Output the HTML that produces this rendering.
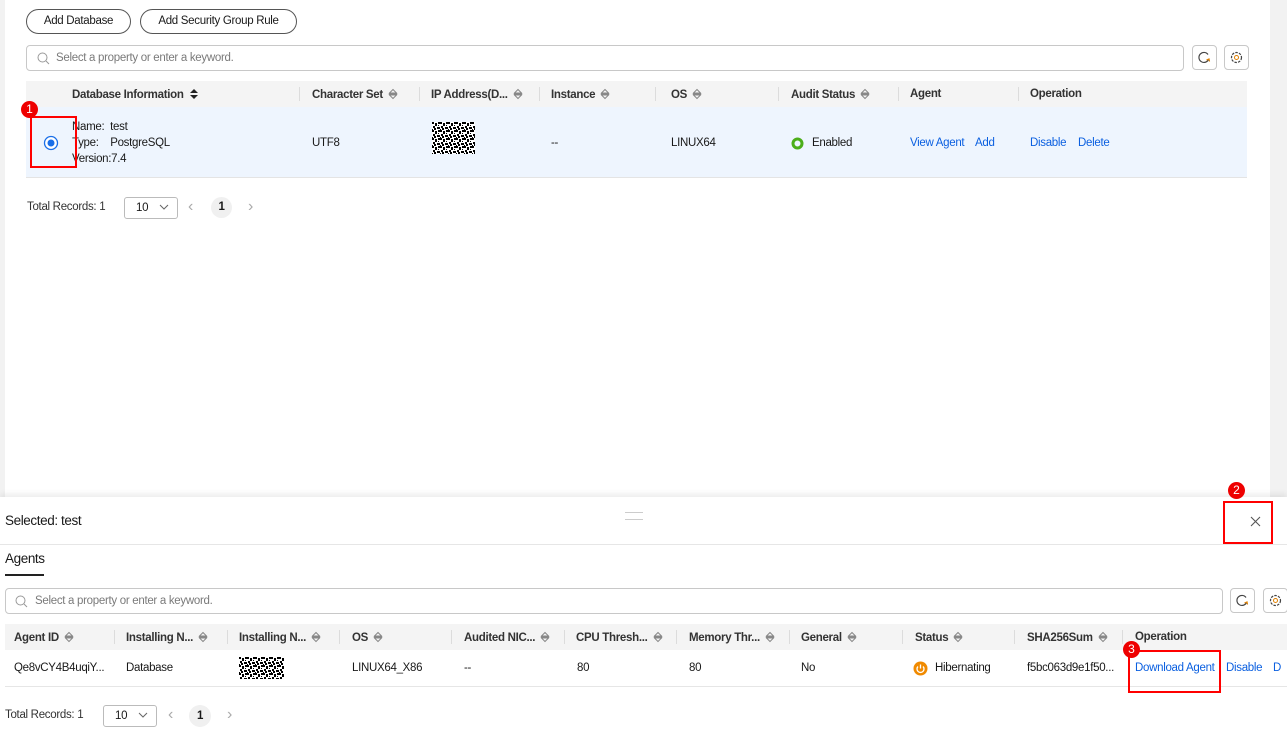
<!DOCTYPE html>
<html><head><meta charset="utf-8"><style>
*{box-sizing:border-box;margin:0;padding:0}
body{width:1287px;height:744px;position:relative;overflow:hidden;background:#fff;font-family:"Liberation Sans",Arial,sans-serif;font-size:11.5px;letter-spacing:-0.3px;color:#191919}
.a{position:absolute;white-space:nowrap}
.btn{position:absolute;border:1px solid #555;border-radius:14px;height:25px;line-height:23px;text-align:center;color:#191919;background:#fff}
.search{position:absolute;border:1px solid #c8c8c8;border-radius:4px;height:26px;color:#7a7a7a;line-height:24px;padding-left:29px}
.ib{position:absolute;width:25px;height:25px;border:1px solid #c8c8c8;border-radius:4px;background:#fff}
.hd{position:absolute;background:#f4f4f4;height:26px}
.th{position:absolute;top:7px;font-weight:bold;color:#333;white-space:nowrap}
.sep{position:absolute;top:6px;width:1px;height:14px;background:#dcdcdc}
.lnk{color:#0a5fe0}
.red{position:absolute;border:2px solid #f00}
.badge{position:absolute;width:17px;height:17px;border-radius:50%;background:#e00;color:#fff;font-size:12px;line-height:17px;text-align:center;letter-spacing:0}
.sort{display:inline-block;vertical-align:-2px;margin-left:5px}
.big{font-size:13.5px;letter-spacing:-0.4px}
.chev{font-size:16px;color:#aaa}
</style></head><body>
<svg width="0" height="0" style="position:absolute"><defs>
<symbol id="s" viewBox="0 0 10 12"><path d="M1.5 5 L5 1.5 L8.5 5 Z M1.5 7 L5 10.5 L8.5 7 Z" fill="none" stroke="#888" stroke-width="1"/><line x1="1" y1="6" x2="9" y2="6" stroke="#888"/></symbol>
<pattern id="qr" width="8" height="8" patternUnits="userSpaceOnUse"><rect width="8" height="8" fill="#fff"/><rect x="0" y="0" width="2" height="2" fill="#000"/><rect x="3" y="1" width="2" height="3" fill="#000"/><rect x="6" y="0" width="2" height="2" fill="#000"/><rect x="1" y="4" width="2" height="2" fill="#000"/><rect x="5" y="5" width="3" height="2" fill="#000"/><rect x="2" y="6" width="2" height="2" fill="#000"/><rect x="0" y="7" width="1" height="1" fill="#000"/><rect x="6" y="3" width="1" height="1" fill="#000"/></pattern>
</defs></svg>

<div class="a" style="left:0;top:0;width:5px;height:497px;background:#f2f2f2"></div>
<div class="a" style="left:1270px;top:0;width:17px;height:497px;background:#f2f2f2"></div>

<div class="btn" style="left:26px;top:9px;width:105px">Add Database</div>
<div class="btn" style="left:140px;top:9px;width:157px">Add Security Group Rule</div>
<div class="search" style="left:26px;top:45px;width:1158px">Select a property or enter a keyword.</div>
<svg class="a" style="left:37px;top:52px" width="13" height="13"><circle cx="5.5" cy="5.5" r="4.5" fill="none" stroke="#999"/><line x1="9" y1="9" x2="12" y2="12" stroke="#999"/></svg>
<div class="ib" style="left:1192px;top:45px"><svg width="23" height="23"><path d="M15.5 13.5 A5 5 0 1 1 15 8.5" fill="none" stroke="#444" stroke-width="1.2"/><path d="M13.5 14 L16 13 L16.5 15.5" fill="none" stroke="#e08000" stroke-width="1.2"/></svg></div>
<div class="ib" style="left:1224px;top:45px"><svg width="23" height="23"><circle cx="11.5" cy="11.5" r="5" fill="none" stroke="#444" stroke-width="1.2" stroke-dasharray="2.5 1.2"/><circle cx="11.5" cy="11.5" r="2" fill="none" stroke="#e08000"/></svg></div>

<div class="hd" style="left:26px;top:81px;width:1221px">
<div class="th" style="left:46px">Database Information <svg width="10" height="12" style="vertical-align:-2px;margin-left:3px"><path d="M1 5 L5 1 L9 5 Z M1 7 L5 11 L9 7 Z" fill="#222"/></svg></div>
<div class="sep" style="left:273px"></div><div class="th" style="left:286px">Character Set<svg class="sort" width="10" height="12"><use href="#s"/></svg></div>
<div class="sep" style="left:393px"></div><div class="th" style="left:405px">IP Address(D...<svg class="sort" width="10" height="12"><use href="#s"/></svg></div>
<div class="sep" style="left:513px"></div><div class="th" style="left:525px">Instance<svg class="sort" width="10" height="12"><use href="#s"/></svg></div>
<div class="sep" style="left:629px"></div><div class="th" style="left:645px">OS<svg class="sort" width="10" height="12"><use href="#s"/></svg></div>
<div class="sep" style="left:752px"></div><div class="th" style="left:765px">Audit Status<svg class="sort" width="10" height="12"><use href="#s"/></svg></div>
<div class="sep" style="left:872px"></div><div class="th" style="left:884px">Agent</div>
<div class="sep" style="left:992px"></div><div class="th" style="left:1004px">Operation</div>
</div>
<div class="a" style="left:26px;top:107px;width:1221px;height:71px;background:#eef5fe;border-bottom:1px solid #e4e4e4"></div>
<svg class="a" style="left:43px;top:135px" width="16" height="16"><circle cx="8" cy="8" r="6.5" fill="#fff" stroke="#1a6fe8" stroke-width="1.3"/><circle cx="8" cy="8" r="3.5" fill="#1a6fe8"/></svg>
<div class="a" style="left:72px;top:121px">Name:&nbsp;&nbsp;test</div>
<div class="a" style="left:72px;top:137px">Type:&nbsp;&nbsp;&nbsp;&nbsp;PostgreSQL</div>
<div class="a" style="left:72px;top:153px">Version:7.4</div>
<div class="a" style="left:312px;top:137px">UTF8</div>
<svg class="a" style="left:432px;top:122px" width="43" height="32"><rect width="43" height="32" fill="url(#qr)"/></svg>
<div class="a" style="left:551px;top:137px">--</div>
<div class="a" style="left:671px;top:137px">LINUX64</div>
<svg class="a" style="left:791px;top:137px" width="13" height="13"><circle cx="6.5" cy="6.5" r="4.5" fill="none" stroke="#4cae1a" stroke-width="3"/></svg>
<div class="a" style="left:812px;top:137px">Enabled</div>
<div class="a lnk" style="left:910px;top:137px">View Agent</div>
<div class="a lnk" style="left:975px;top:137px">Add</div>
<div class="a lnk" style="left:1030px;top:137px">Disable</div>
<div class="a lnk" style="left:1078px;top:137px">Delete</div>
<div class="red" style="left:30px;top:116px;width:47px;height:52px"></div>
<div class="badge" style="left:21px;top:101px">1</div>

<div class="a" style="left:27px;top:201px;color:#333">Total Records: 1</div>
<div class="a" style="left:124px;top:197px;width:54px;height:22px;border:1px solid #bbb;border-radius:3px;padding:4px 0 0 11px">10 <svg width="10" height="8" style="margin-left:8px"><path d="M1 2 L5 6 L9 2" fill="none" stroke="#666"/></svg></div>
<div class="a chev" style="left:188px;top:198px">&lsaquo;</div>
<div class="a" style="left:211px;top:197px;width:21px;height:21px;border-radius:50%;background:#f0f0f0;text-align:center;line-height:21px;font-weight:bold">1</div>
<div class="a chev" style="left:248px;top:198px">&rsaquo;</div>

<!-- drawer -->
<div class="a" style="left:0;top:497px;width:1287px;height:247px;background:#fff;box-shadow:0 -3px 6px rgba(0,0,0,0.08)"></div>
<div class="a big" style="left:5px;top:513px">Selected: test</div>
<div class="a" style="left:625px;top:512px;width:18px;height:1px;background:#ccc"></div>
<div class="a" style="left:625px;top:519px;width:18px;height:1px;background:#ccc"></div>
<svg class="a" style="left:1250px;top:516px" width="11" height="11"><path d="M1 1 L10 10 M10 1 L1 10" stroke="#555" stroke-width="1.1"/></svg>
<div class="a" style="left:0;top:544px;width:1287px;height:1px;background:#e6e6e6"></div>
<div class="red" style="left:1223px;top:501px;width:50px;height:43px"></div>
<div class="badge" style="left:1228px;top:482px">2</div>
<div class="a big" style="left:5px;top:551px">Agents</div>
<div class="a" style="left:5px;top:574px;width:39px;height:2px;background:#222"></div>

<div class="search" style="left:5px;top:588px;width:1218px">Select a property or enter a keyword.</div>
<svg class="a" style="left:15px;top:595px" width="13" height="13"><circle cx="5.5" cy="5.5" r="4.5" fill="none" stroke="#999"/><line x1="9" y1="9" x2="12" y2="12" stroke="#999"/></svg>
<div class="ib" style="left:1230px;top:588px"><svg width="23" height="23"><path d="M15.5 13.5 A5 5 0 1 1 15 8.5" fill="none" stroke="#444" stroke-width="1.2"/><path d="M13.5 14 L16 13 L16.5 15.5" fill="none" stroke="#e08000" stroke-width="1.2"/></svg></div>
<div class="ib" style="left:1263px;top:588px"><svg width="23" height="23"><circle cx="11.5" cy="11.5" r="5" fill="none" stroke="#444" stroke-width="1.2" stroke-dasharray="2.5 1.2"/><circle cx="11.5" cy="11.5" r="2" fill="none" stroke="#e08000"/></svg></div>

<div class="hd" style="left:5px;top:624px;width:1282px">
<div class="th" style="left:9px">Agent ID<svg class="sort" width="10" height="12"><use href="#s"/></svg></div>
<div class="sep" style="left:109px"></div><div class="th" style="left:121px">Installing N...<svg class="sort" width="10" height="12"><use href="#s"/></svg></div>
<div class="sep" style="left:222px"></div><div class="th" style="left:234px">Installing N...<svg class="sort" width="10" height="12"><use href="#s"/></svg></div>
<div class="sep" style="left:334px"></div><div class="th" style="left:347px">OS<svg class="sort" width="10" height="12"><use href="#s"/></svg></div>
<div class="sep" style="left:446px"></div><div class="th" style="left:459px">Audited NIC...<svg class="sort" width="10" height="12"><use href="#s"/></svg></div>
<div class="sep" style="left:559px"></div><div class="th" style="left:571px">CPU Thresh...<svg class="sort" width="10" height="12"><use href="#s"/></svg></div>
<div class="sep" style="left:671px"></div><div class="th" style="left:684px">Memory Thr...<svg class="sort" width="10" height="12"><use href="#s"/></svg></div>
<div class="sep" style="left:784px"></div><div class="th" style="left:796px">General<svg class="sort" width="10" height="12"><use href="#s"/></svg></div>
<div class="sep" style="left:897px"></div><div class="th" style="left:910px">Status<svg class="sort" width="10" height="12"><use href="#s"/></svg></div>
<div class="sep" style="left:1009px"></div><div class="th" style="left:1022px">SHA256Sum<svg class="sort" width="10" height="12"><use href="#s"/></svg></div>
<div class="sep" style="left:1117px"></div><div class="th" style="left:1130px">Operation</div>
</div>
<div class="a" style="left:5px;top:686px;width:1282px;height:1px;background:#e6e6e6"></div>
<div class="a" style="left:14px;top:662px">Qe8vCY4B4uqiY...</div>
<div class="a" style="left:126px;top:662px">Database</div>
<svg class="a" style="left:239px;top:657px" width="45" height="22"><rect width="45" height="22" fill="url(#qr)"/></svg>
<div class="a" style="left:352px;top:662px">LINUX64_X86</div>
<div class="a" style="left:464px;top:662px">--</div>
<div class="a" style="left:577px;top:662px">80</div>
<div class="a" style="left:689px;top:662px">80</div>
<div class="a" style="left:801px;top:662px">No</div>
<svg class="a" style="left:913px;top:661px" width="15" height="15"><circle cx="7.5" cy="7.5" r="7" fill="#f08a00"/><path d="M5 5.5 A3.5 3.5 0 1 0 10 5.5" fill="none" stroke="#fff" stroke-width="1.3"/><line x1="7.5" y1="3.5" x2="7.5" y2="7.5" stroke="#fff" stroke-width="1.3"/></svg>
<div class="a" style="left:935px;top:662px">Hibernating</div>
<div class="a" style="left:1027px;top:662px">f5bc063d9e1f50...</div>
<div class="a lnk" style="left:1135px;top:662px">Download Agent</div>
<div class="a lnk" style="left:1226px;top:662px">Disable</div>
<div class="a lnk" style="left:1273px;top:662px">D</div>
<div class="red" style="left:1128px;top:650px;width:93px;height:43px"></div>
<div class="badge" style="left:1123px;top:641px">3</div>

<div class="a" style="left:5px;top:709px;color:#333">Total Records: 1</div>
<div class="a" style="left:103px;top:705px;width:54px;height:22px;border:1px solid #bbb;border-radius:3px;padding:4px 0 0 11px">10 <svg width="10" height="8" style="margin-left:8px"><path d="M1 2 L5 6 L9 2" fill="none" stroke="#666"/></svg></div>
<div class="a chev" style="left:168px;top:706px">&lsaquo;</div>
<div class="a" style="left:189px;top:705px;width:22px;height:22px;border-radius:50%;background:#f0f0f0;text-align:center;line-height:22px;font-weight:bold">1</div>
<div class="a chev" style="left:227px;top:706px">&rsaquo;</div>
</body></html>
